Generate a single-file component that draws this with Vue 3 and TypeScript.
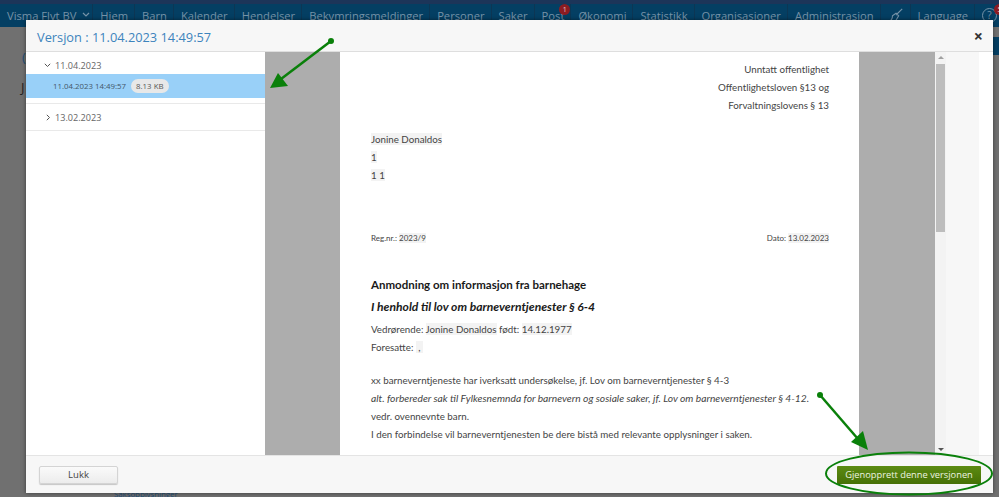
<script setup lang="ts">
const navItems = [
  'Hjem', 'Barn', 'Kalender', 'Hendelser', 'Bekymringsmeldinger', 'Personer', 'Saker', 'Post',
  'Økonomi', 'Statistikk', 'Organisasjoner', 'Administrasjon',
]
const addressLines = ['Unntatt offentlighet', 'Offentlighetsloven §13 og', 'Forvaltningslovens § 13']
</script>

<template>
  <div class="page">
    <nav class="topnav">
      <div class="nav-item brand">
        Visma Flyt BV
        <svg class="brand-chevron" width="8" height="6" viewBox="0 0 8 6"><path d="M1 1l3 3 3-3" /></svg>
      </div>
      <div v-for="item in navItems" :key="item" class="nav-item">
        {{ item }}
        <span v-if="item === 'Post'" class="badge">1</span>
      </div>
      <div class="nav-item broom">
        <svg width="16" height="16" viewBox="0 0 18 18"><path d="M16 2L9 9M9 7l3 3-3 5-8 1c3-1 4-3 4-6z" /></svg>
      </div>
      <div class="nav-item">Language</div>
      <div class="nav-item help"><span class="help-ring">?</span><span class="badge help-badge">5</span></div>
    </nav>

    <div class="behind">
      <span class="behind-a">(</span>
      <span class="behind-b">J</span>
      <span class="behind-c">Saksopplysninger</span>
    </div>
    <div class="side-strip"></div>

    <section class="modal">
      <header class="modal-head">
        <h1>Versjon : 11.04.2023 14:49:57</h1>
        <span class="close">×</span>
      </header>

      <div class="modal-body">
        <aside class="tree">
          <div class="tree-day">
            <svg width="7" height="5" viewBox="0 0 7 5"><path d="M.8.8l2.7 2.7L6.200.8" /></svg>
            11.04.2023
          </div>
          <div class="tree-version">
            11.04.2023 14:49:57 <span class="size">8.13 KB</span>
          </div>
          <div class="tree-day closed">
            <svg width="5" height="7" viewBox="0 0 5 7"><path d="M.8.8l2.7 2.7L.8 6.200" /></svg>
            13.02.2023
          </div>
        </aside>

        <div class="viewer">
          <article class="doc">
            <div class="address">
              <p v-for="line in addressLines" :key="line">{{ line }}</p>
            </div>
            <div class="recipient">
              <p><mark>Jonine Donaldos</mark></p>
              <p><mark>1</mark></p>
              <p><mark>1 1</mark></p>
            </div>
            <div class="refs">
              <span>Reg.nr.: <mark>2023/9</mark></span>
              <span>Dato: <mark>13.02.2023</mark></span>
            </div>
            <h2>Anmodning om informasjon fra barnehage</h2>
            <h3>I henhold til lov om barneverntjenester § 6-4</h3>
            <p>Vedrørende: <mark>Jonine Donaldos</mark> født: <mark>14.12.1977</mark></p>
            <p>Foresatte: <mark>&nbsp;,&nbsp;</mark></p>
            <p class="gap">xx barneverntjeneste har iverksatt undersøkelse, jf. Lov om barneverntjenester § 4-3</p>
            <p><em>alt. forbereder sak til Fylkesnemnda for barnevern og sosiale saker, jf. Lov om barneverntjenester § 4-12.</em></p>
            <p>vedr. ovennevnte barn.</p>
            <p>I den forbindelse vil barneverntjenesten be dere bistå med relevante opplysninger i saken.</p>
          </article>
          <div class="scrollbar">
            <span class="arrow-up"></span>
            <span class="thumb"></span>
            <span class="arrow-down"></span>
          </div>
          <div class="gutter"></div>
        </div>
      </div>

      <footer class="modal-foot">
        <button class="btn">Lukk</button>
        <button class="btn primary">Gjenopprett denne versjonen</button>
      </footer>
    </section>

    <svg class="annotations" width="999" height="497" viewBox="0 0 999 497">
      <circle cx="331" cy="41" r="3" fill="#0a800a" />
      <path d="M331 41L281 79" stroke="#0a800a" stroke-width="2.500" fill="none" />
      <path d="M270 88L278 73 288 86z" fill="#0a800a" />
      <circle cx="820" cy="395" r="3" fill="#0a800a" />
      <path d="M820 395L858 439" stroke="#0a800a" stroke-width="2.500" fill="none" />
      <path d="M868 450L851 442 863 431z" fill="#0a800a" />
      <ellipse cx="909" cy="473.500" rx="83" ry="21" fill="none" stroke="#0a800a" stroke-width="2" />
    </svg>
  </div>
</template>

<style>
html,
body {
  margin: 0;
  overflow: hidden;
}
</style>

<style scoped>
.page {
  position: relative;
  width: 999px;
  height: 497px;
  overflow: hidden;
  background: #707070;
  font-family: "Open Sans", "Liberation Sans", sans-serif;
}

.topnav {
  display: flex;
  height: 23px;
  border-top: 4px solid #1c3559;
  background: #043f63;
  color: #7693a8;
  font-size: 11.200px;
  white-space: nowrap;
}

.nav-item {
  position: relative;
  display: flex;
  align-items: center;
  flex: none;
  box-sizing: border-box;
  height: 22px;
  padding: 0 6px 0 7px;
  border-right: 1px solid #0c3654;
}

.brand {
  gap: 6px;
  padding-right: 2px;
}

.brand-chevron path {
  fill: none;
  stroke: #7693a8;
  stroke-width: 1.200;
}

.broom svg path {
  fill: none;
  stroke: #7693a8;
  stroke-width: 1.200;
}

.badge {
  position: absolute;
  top: 0;
  right: 0;
  width: 11px;
  height: 11px;
  border-radius: 50%;
  background: #8c1c22;
  color: #e8c9c9;
  font-size: 7px;
  line-height: 11px;
  text-align: center;
}

.help {
  border-right: 0;
}

.help-ring {
  width: 13px;
  height: 13px;
  border: 1px solid #7693a8;
  border-radius: 50%;
  font-size: 10px;
  line-height: 13px;
  text-align: center;
}

.help-badge {
  top: 0;
  right: -2px;
}

.behind-a,
.behind-b,
.behind-c {
  position: absolute;
  font-size: 13px;
}

.behind-a {
  left: 22px;
  top: 48px;
  color: #1f4f78;
}

.behind-b {
  left: 21px;
  top: 78px;
  color: #222;
}

.behind-c {
  left: 114px;
  top: 489px;
  color: #1f4f78;
  font-size: 7.800px;
}

.side-strip {
  position: absolute;
  left: 993px;
  top: 37px;
  width: 6px;
  height: 18px;
  background: #043f63;
}

.modal {
  position: absolute;
  left: 26px;
  top: 20px;
  width: 967px;
  height: 473px;
  display: flex;
  flex-direction: column;
  background: #fff;
  box-shadow: 0 0 4px rgba(0, 0, 0, 0.5);
}

.modal-head {
  display: flex;
  align-items: center;
  justify-content: space-between;
  flex: none;
  box-sizing: border-box;
  height: 32px;
  padding: 3px 10px 0 11px;
  background: #f7f7f7;
  border-bottom: 1px solid #dedede;
}

.modal-head h1 {
  margin: 0;
  color: #3d84bd;
  font-size: 12.800px;
  font-weight: 400;
}

.close {
  margin-top: -3px;
  color: #333;
  font-size: 16px;
  font-weight: 700;
  line-height: 1;
}

.modal-body {
  display: flex;
  flex: 1;
  min-height: 0;
}

.tree {
  flex: none;
  width: 239px;
  color: #666;
  font-size: 9.100px;
}

.tree-day {
  display: flex;
  align-items: center;
  gap: 4px;
  box-sizing: border-box;
  height: 22px;
  padding: 5px 0 0 18px;
}

.tree-day svg path {
  fill: none;
  stroke: #555;
  stroke-width: 1;
}

.tree-day.closed {
  height: 28px;
  margin-top: 5px;
  padding: 0 0 0 20px;
  border-top: 1px solid #e9e9e9;
  border-bottom: 1px solid #e9e9e9;
}

.tree-version {
  display: flex;
  align-items: center;
  gap: 5px;
  box-sizing: border-box;
  height: 24px;
  padding-left: 27px;
  background: #99d0f8;
  color: #44576a;
  font-size: 7.850px;
}

.size {
  padding: 2px 5px;
  border-radius: 8px;
  background: #e8e8e8;
  color: #555;
}

.viewer {
  display: flex;
  flex: 1;
  min-width: 0;
  background: #adadad;
  padding-left: 75px;
}

.doc {
  flex: none;
  box-sizing: border-box;
  width: 519px;
  height: 403px;
  margin-right: 76px;
  padding: 8px 30px 0 31px;
  overflow: hidden;
  background: #fff;
  color: #444;
  font-family: Lato, "Open Sans", sans-serif;
  font-size: 9.750px;
  line-height: 18px;
}

.doc p {
  margin: 0;
}

.doc em {
  font-size: 10.250px;
}

.doc mark {
  background: #f3f3f3;
  color: inherit;
}

.address {
  text-align: right;
}

.recipient {
  margin-top: 16px;
}

.refs {
  display: flex;
  justify-content: space-between;
  margin-top: 45px;
  font-size: 8px;
}

.doc h2 {
  margin: 27px 0 0;
  color: #1a1a1a;
  font-size: 11.500px;
  font-weight: 700;
  line-height: 22px;
}

.doc h3 {
  margin: 0 0 2px;
  color: #1a1a1a;
  font-size: 12.100px;
  font-style: italic;
  font-weight: 700;
  line-height: 22px;
}

.doc .gap {
  margin-top: 15px;
}

.scrollbar {
  display: flex;
  flex-direction: column;
  align-items: center;
  flex: none;
  width: 11px;
  background: #f3f3f3;
}

.arrow-up,
.arrow-down {
  width: 0;
  height: 0;
  margin: 4px 0;
  border-left: 3px solid transparent;
  border-right: 3px solid transparent;
}

.arrow-up {
  border-bottom: 3px solid #a0a0a0;
}

.arrow-down {
  margin-top: auto;
  border-top: 3px solid #555;
}

.thumb {
  width: 9px;
  height: 168px;
  margin-top: 1px;
  background: #bdbdbd;
}

.gutter {
  flex: none;
  width: 33px;
  margin-right: 14px;
  background: #f7f7f7;
  box-shadow: 14px 0 0 #fff;
}

.modal-foot {
  display: flex;
  align-items: center;
  justify-content: space-between;
  flex: none;
  box-sizing: border-box;
  height: 38px;
  padding: 0 12px 0 13px;
  background: #f7f7f7;
  border-top: 1px solid #e4e4e4;
}

.btn {
  width: 79px;
  height: 18px;
  padding: 0;
  border: 1px solid #d4d4d4;
  border-radius: 2px;
  background: linear-gradient(#fafafa, #ececec);
  box-shadow: 0 1px 1px rgba(0, 0, 0, 0.2);
  color: #444;
  font-family: inherit;
  font-size: 9.500px;
  white-space: nowrap;
}

.btn.primary {
  width: 144px;
  border: 0;
  border-radius: 1px;
  background: linear-gradient(#5c8b12, #467006);
  box-shadow: none;
  color: #eef4e0;
  font-size: 9.300px;
}

.annotations {
  position: absolute;
  left: 0;
  top: 0;
  pointer-events: none;
}
</style>
